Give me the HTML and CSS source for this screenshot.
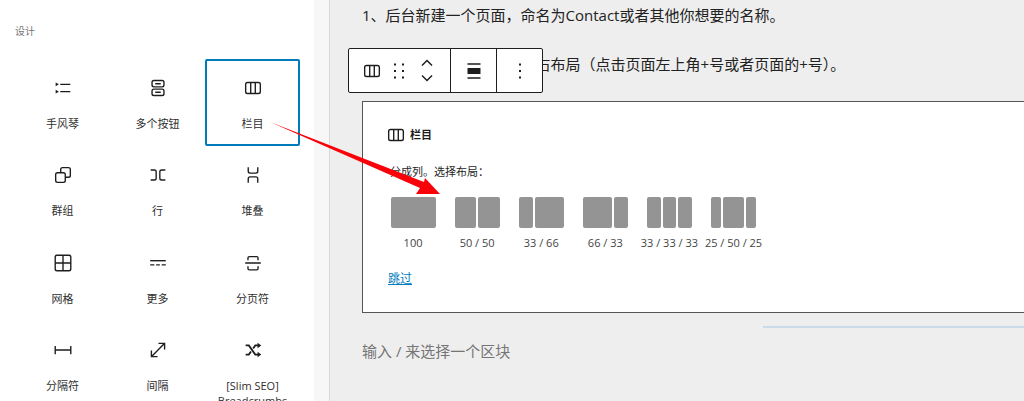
FILE: index.html
```html
<!DOCTYPE html>
<html lang="zh-CN">
<head>
    <meta charset="UTF-8">
    <meta name="viewport" content="width=device-width, initial-scale=1.0">
    <title>栏目</title>
    <link rel="stylesheet" href="styles.css">
</head>
<body>
    <div class="layout">
        <aside class="inserter">
            <div class="panel-title">设计</div>
            <div class="block-grid">
                <div class="block-item">
                    <svg class="icon" viewBox="0 0 24 24"><path d="M9 8h11M9 16h11" class="line" /><path d="M4 6l3.500 2L4 10zM4 14l3.500 2L4 18z" class="fill" /></svg>
                    <span>手风琴</span>
                </div>
                <div class="block-item">
                    <svg class="icon" viewBox="0 0 24 24"><rect x="5.500" y="3.800" width="13" height="7" rx="2" class="line" /><rect x="5.500" y="13.200" width="13" height="7" rx="2" class="line" /><path d="M9 7.300h6M9 16.700h6" class="line" /></svg>
                    <span>多个按钮</span>
                </div>
                <div class="block-item selected">
                    <svg class="icon" viewBox="0 0 24 24"><rect x="4" y="6" width="16" height="12" rx="2" class="line" /><path d="M9.500 6v12M14.500 6v12" class="line" /></svg>
                    <span>栏目</span>
                </div>
                <div class="block-item">
                    <svg class="icon" viewBox="0 0 24 24"><rect x="4" y="9.500" width="10.500" height="10.500" rx="2" class="line" /><path d="M9.500 9.500V6a2 2 0 0 1 2-2H18a2 2 0 0 1 2 2v6.500a2 2 0 0 1-2 2h-3.500" class="line" /></svg>
                    <span>群组</span>
                </div>
                <div class="block-item">
                    <svg class="icon" viewBox="0 0 24 24"><path d="M4 6.500h4a2 2 0 0 1 2 2v7a2 2 0 0 1-2 2H4M20 6.500h-4a2 2 0 0 0-2 2v7a2 2 0 0 0 2 2h4" class="line" /></svg>
                    <span>行</span>
                </div>
                <div class="block-item">
                    <svg class="icon" viewBox="0 0 24 24"><path d="M6.800 3.500V8a2 2 0 0 0 2 2h6.400a2 2 0 0 0 2-2V3.500M6.800 20.500V16a2 2 0 0 1 2-2h6.400a2 2 0 0 1 2 2v4.500" class="line" /></svg>
                    <span>堆叠</span>
                </div>
                <div class="block-item">
                    <svg class="icon" viewBox="0 0 24 24"><rect x="3.500" y="3.500" width="17" height="17" rx="2" class="line" /><path d="M12 3.500v17M3.500 12h17" class="line" /></svg>
                    <span>网格</span>
                </div>
                <div class="block-item">
                    <svg class="icon" viewBox="0 0 24 24"><path d="M3.500 9.500h17" class="line" /><path d="M3.500 14h4.500M10 14h4M16 14h4.500" class="line" /></svg>
                    <span>更多</span>
                </div>
                <div class="block-item">
                    <svg class="icon" viewBox="0 0 24 24"><path d="M6.500 9V6.500A1.500 1.500 0 0 1 8 5h8a1.500 1.500 0 0 1 1.500 1.500V9M6.500 15.500V18A1.500 1.500 0 0 0 8 19.500h8a1.500 1.500 0 0 0 1.500-1.500v-2.500M3.500 12h17" class="line" /></svg>
                    <span>分页符</span>
                </div>
                <div class="block-item">
                    <svg class="icon" viewBox="0 0 24 24"><path d="M3.500 7.500v9M20.500 7.500v9M3.500 12h17" class="line" /></svg>
                    <span>分隔符</span>
                </div>
                <div class="block-item">
                    <svg class="icon" viewBox="0 0 24 24"><path d="M5 19L19 5M12.500 4.800h6.700v6.700M11.500 19.200H4.800v-6.700" class="line" /></svg>
                    <span>间隔</span>
                </div>
                <div class="block-item">
                    <svg class="icon" viewBox="0 0 24 24"><path d="M4 7h3.500l7 10H18M4 17h3.500l2.300-3.300M12.200 10.300L14.500 7H18" class="line heavy" /><path d="M17 4l4 3-4 3zM17 14l4 3-4 3z" class="fill" /></svg>
                    <span>[Slim SEO] Breadcrumbs</span>
                </div>
            </div>
        </aside>
        <div class="gutter"></div>
        <main class="editor">
            <p class="para first">1、后台新建一个页面，命名为Contact或者其他你想要的名称。</p>
            <p class="para second">2、添加一个栏目，选择左右布局（点击页面左上角+号或者页面的+号）。</p>
            <section class="columns-block">
                <div class="block-label">
                    <svg class="icon" viewBox="0 0 24 24"><rect x="4" y="6" width="16" height="12" rx="2" class="line" /><path d="M9.500 6v12M14.500 6v12" class="line" /></svg>
                    <span>栏目</span>
                </div>
                <div class="instructions">分成列。选择布局：</div>
                <div class="variations">
                    <div class="variation">
                        <div class="thumb"><i class="one"></i></div>
                        <span>100</span>
                    </div>
                    <div class="variation">
                        <div class="thumb"><i class="one"></i><i class="one"></i></div>
                        <span>50 / 50</span>
                    </div>
                    <div class="variation">
                        <div class="thumb"><i class="one"></i><i class="two"></i></div>
                        <span>33 / 66</span>
                    </div>
                    <div class="variation">
                        <div class="thumb"><i class="two"></i><i class="one"></i></div>
                        <span>66 / 33</span>
                    </div>
                    <div class="variation">
                        <div class="thumb"><i class="one"></i><i class="one"></i><i class="one"></i></div>
                        <span>33 / 33 / 33</span>
                    </div>
                    <div class="variation">
                        <div class="thumb"><i class="one"></i><i class="two"></i><i class="one"></i></div>
                        <span>25 / 50 / 25</span>
                    </div>
                </div>
                <a class="skip" href="#">跳过</a>
            </section>
            <div class="insert-line"></div>
            <p class="placeholder">输入 / 来选择一个区块</p>

            <div class="toolbar">
                <div class="tool-group blocks">
                    <svg class="icon" viewBox="0 0 24 24"><rect x="4" y="6" width="16" height="12" rx="2" class="line" /><path d="M9.500 6v12M14.500 6v12" class="line" /></svg>
                    <svg class="icon wide" viewBox="0 0 24 24"><path d="M7 4.500h2v2H7zM15 4.500h2v2h-2zM7 11h2v2H7zM15 11h2v2h-2zM7 17.500h2v2H7zM15 17.500h2v2h-2z" class="fill" /></svg>
                    <div class="movers">
                        <svg viewBox="0 0 12 8"><path d="M1 6.500l5-5 5 5" class="line" /></svg>
                        <svg viewBox="0 0 12 8"><path d="M1 1.500l5 5 5-5" class="line" /></svg>
                    </div>
                </div>
                <div class="tool-group align">
                    <svg class="icon wide" viewBox="0 0 24 24"><path d="M5.500 5h13M5.500 19h13" class="line" /><rect x="5.500" y="9" width="13" height="6" class="fill" /></svg>
                </div>
                <div class="tool-group more">
                    <svg class="icon wide" viewBox="0 0 24 24"><path d="M11 4.500h2v2h-2zM11 11h2v2h-2zM11 17.500h2v2h-2z" class="fill" /></svg>
                </div>
            </div>
        </main>
        <svg class="arrow" viewBox="0 0 1024 401"><polygon points="270,122 424,182 425,178 440,194 416,194 420,188" /></svg>
    </div>
</body>
</html>
```

FILE: styles.css
```css
* {
    box-sizing: border-box;
}
html, body {
    margin: 0;
    height: 401px;
    overflow: hidden;
}
body {
    font-family: "Open Sans", "Noto Sans CJK SC", sans-serif;
    color: #1e1e1e;
    background-color: #eee;
}
.layout {
    position: relative;
    display: flex;
    height: 401px;
    overflow: hidden;
}
.inserter {
    width: 314px;
    flex-shrink: 0;
    background: white;
    padding: 24px 14px 0 15px;
}
.gutter {
    width: 16px;
    flex-shrink: 0;
    background-color: #f7f7f7;
    border-right: 1px solid #d8d8d8;
}
.panel-title {
    font-size: 10px;
    line-height: 14px;
    color: #757575;
    margin-bottom: 21px;
}
.block-grid {
    display: grid;
    grid-template-columns: repeat(3, 95px);
    grid-auto-rows: 87.3px;
}
.block-item {
    display: flex;
    flex-direction: column;
    align-items: center;
    padding-top: 18px;
    font-size: 11px;
    line-height: 15px;
    text-align: center;
    border-radius: 2px;
    color: #2f2f2f;
}
.block-item span {
    margin-top: 17px;
    width: 88px;
}
.block-item.selected {
    border: 2px solid #007cba;
    padding-top: 16px;
}
.icon {
    width: 22px;
    height: 22px;
    flex-shrink: 0;
}
.icon.wide {
    width: 24px;
    height: 24px;
}
.line {
    fill: none;
    stroke: #1e1e1e;
    stroke-width: 1.5;
}
.line.heavy {
    stroke-width: 2;
}
.fill {
    fill: #1e1e1e;
}
.editor {
    position: relative;
    flex: 1;
    min-width: 0;
    padding: 0 0 0 32px;
}
.para {
    margin: 0;
    font-size: 15px;
    line-height: 20px;
    white-space: nowrap;
    color: #222;
}
.para.first {
    padding-top: 5px;
}
.para.second {
    margin-top: 29px;
}
.columns-block {
    width: 700px;
    height: 212px;
    margin-top: 27px;
    background: white;
    border: 1px solid #555;
    padding: 21px 0 0 25px;
}
.block-label {
    display: flex;
    align-items: center;
    gap: 3px;
    margin-left: -3px;
    font-size: 11px;
    font-weight: 700;
    line-height: 24px;
}
.instructions {
    margin: 16px 0 0 2px;
    font-size: 11px;
    line-height: 18px;
}
.variations {
    display: flex;
    margin: 16px 0 0 -7px;
}
.variation {
    width: 64.1px;
    display: flex;
    flex-direction: column;
    align-items: center;
    font-size: 11px;
    line-height: 14px;
    color: #444;
    white-space: nowrap;
}
.thumb {
    display: flex;
    gap: 2px;
    width: 45px;
    height: 31px;
    margin-bottom: 8px;
}
.thumb i {
    display: block;
    background-color: #949494;
    border-radius: 2px;
}
.thumb .one {
    flex: 1;
}
.thumb .two {
    flex: 2;
}
.skip {
    display: inline-block;
    margin-top: 20px;
    font-size: 12px;
    line-height: 18px;
    color: #007cba;
}
.insert-line {
    height: 2px;
    margin: 13px 0 0 401px;
    background-color: #c8dbe6;
}
.placeholder {
    margin: 13px 0 0;
    font-size: 15px;
    line-height: 20px;
    color: #757575;
}
.toolbar {
    position: absolute;
    left: 18px;
    top: 48px;
    display: flex;
    width: 195px;
    height: 45px;
    background: white;
    border: 1px solid #1e1e1e;
    border-radius: 2px;
}
.tool-group {
    display: flex;
    align-items: center;
    justify-content: center;
}
.tool-group.blocks {
    width: 102px;
    padding-left: 12px;
    gap: 4px;
    justify-content: flex-start;
    border-right: 1px solid #1e1e1e;
}
.tool-group.align {
    width: 46px;
    border-right: 1px solid #1e1e1e;
}
.tool-group.more {
    flex: 1;
}
.movers {
    display: flex;
    flex-direction: column;
    gap: 7px;
    margin-left: 6px;
}
.movers svg {
    width: 12px;
    height: 8px;
    display: block;
}
.arrow {
    position: absolute;
    left: 0;
    top: 0;
    width: 1024px;
    height: 401px;
    pointer-events: none;
}
.arrow polygon {
    fill: #fa0008;
}
```
